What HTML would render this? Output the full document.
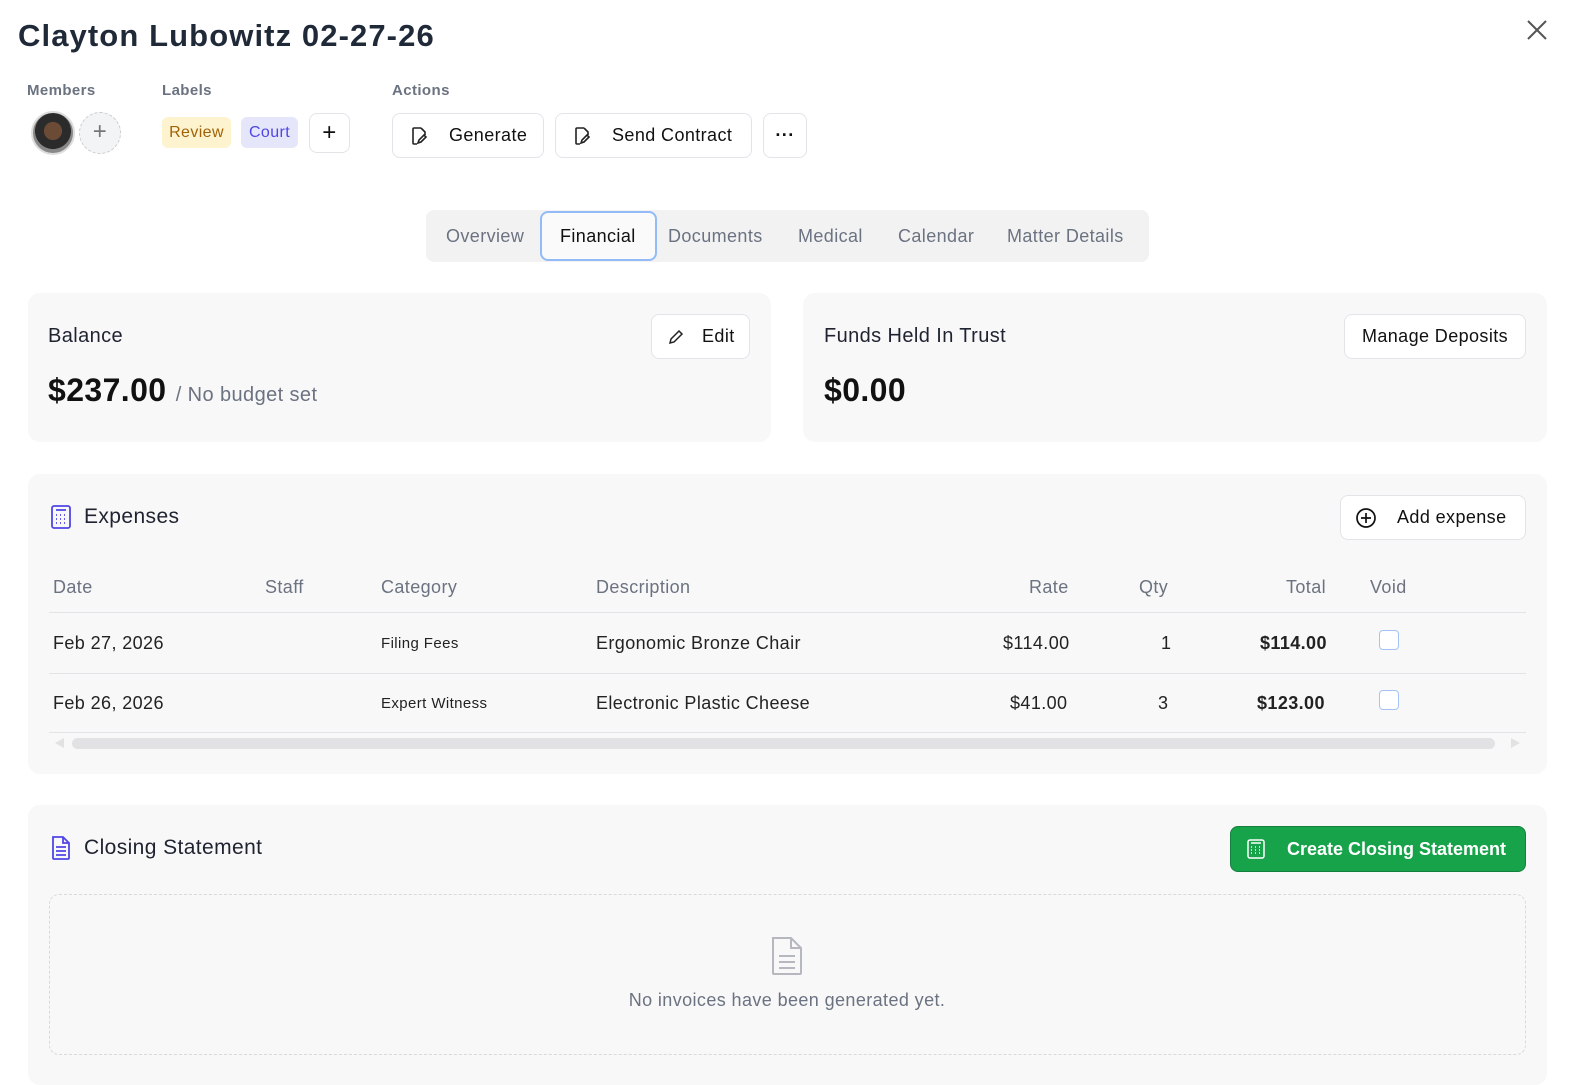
<!DOCTYPE html>
<html><head><meta charset="utf-8"><style>
*{box-sizing:border-box;margin:0;padding:0}
body{width:1588px;height:1084px;background:#fff;font-family:"Liberation Sans",sans-serif;color:#1f2330;position:relative;overflow:hidden;letter-spacing:0.4px}
.a{position:absolute}
.lbl{font-size:15px;color:#6b7280;font-weight:bold}
.btn{position:absolute;border:1px solid #e2e4e8;border-radius:8px;background:#fff;display:flex;align-items:center;font-size:18px;color:#111}
.card{position:absolute;background:#f8f8f9;border-radius:12px}
.th{position:absolute;top:577px;font-size:18px;color:#6b7280}
.td{position:absolute;font-size:18px;color:#222}
.sm{font-size:15px}
.cb{position:absolute;width:20px;height:20px;border:1.5px solid #a5c4f5;border-radius:4px;background:#fff}
</style></head><body>
<div class="a" style="left:18px;top:18px;font-size:31px;font-weight:bold;color:#1f2937;letter-spacing:1.1px">Clayton Lubowitz 02-27-26</div>
<svg class="a" style="left:1525px;top:18px" width="24" height="24" viewBox="0 0 24 24"><path d="M3 3L21 21M21 3L3 21" stroke="#555" stroke-width="2"/></svg>

<div class="a lbl" style="left:27px;top:82px">Members</div>
<div class="a lbl" style="left:162px;top:82px">Labels</div>
<div class="a lbl" style="left:392px;top:82px">Actions</div>
<div class="a" style="left:31px;top:111px;width:44px;height:44px;border-radius:50%;background:radial-gradient(circle at 50% 45%,#6b4a36 0 30%,#2b2b2b 31% 60%,#888 61%);border:2px solid #ddd"></div>
<div class="a" style="left:79px;top:112px;width:42px;height:42px;border-radius:50%;border:1.5px dashed #ccc;background:#f3f4f6;text-align:center;line-height:38px;font-size:24px;color:#777">+</div>
<div class="a" style="left:162px;top:117px;width:69px;height:31px;border-radius:6px;background:#fdf3cf;color:#a16207;font-size:16px;text-align:center;line-height:31px">Review</div>
<div class="a" style="left:241px;top:117px;width:57px;height:31px;border-radius:6px;background:#e6e6fb;color:#4f46e5;font-size:16px;text-align:center;line-height:31px">Court</div>
<div class="btn" style="left:309px;top:113px;width:41px;height:40px;justify-content:center;font-size:24px">+</div>
<div class="btn" style="left:392px;top:113px;width:152px;height:45px;padding-left:16px"><svg width="20" height="20" viewBox="0 0 20 20" fill="none" stroke="#222" stroke-width="1.6"><path d="M12 2H5a1 1 0 0 0-1 1v14a1 1 0 0 0 1 1h3M12 2l4 4v3M9 17l1-3 5-5 2 2-5 5z"/></svg><span style="margin-left:20px">Generate</span></div>
<div class="btn" style="left:555px;top:113px;width:197px;height:45px;padding-left:16px"><svg width="20" height="20" viewBox="0 0 20 20" fill="none" stroke="#222" stroke-width="1.6"><path d="M12 2H5a1 1 0 0 0-1 1v14a1 1 0 0 0 1 1h3M12 2l4 4v3M9 17l1-3 5-5 2 2-5 5z"/></svg><span style="margin-left:20px">Send Contract</span></div>
<div class="btn" style="left:763px;top:113px;width:44px;height:45px;justify-content:center;font-weight:bold">···</div>

<div class="a" style="left:426px;top:210px;width:723px;height:52px;background:#f2f2f3;border-radius:8px"></div>
<div class="a" style="left:540px;top:211px;width:117px;height:50px;background:#fafafa;border:2px solid #93bbf7;border-radius:8px"></div>
<div class="a" style="top:226px;left:446px;font-size:18px;color:#6b7280">Overview</div>
<div class="a" style="top:226px;left:560px;font-size:18px;color:#111">Financial</div>
<div class="a" style="top:226px;left:668px;font-size:18px;color:#6b7280">Documents</div>
<div class="a" style="top:226px;left:798px;font-size:18px;color:#6b7280">Medical</div>
<div class="a" style="top:226px;left:898px;font-size:18px;color:#6b7280">Calendar</div>
<div class="a" style="top:226px;left:1007px;font-size:18px;color:#6b7280">Matter Details</div>

<div class="card" style="left:28px;top:293px;width:743px;height:149px"></div>
<div class="a" style="left:48px;top:325px;font-size:20px">Balance</div>
<div class="btn" style="left:651px;top:314px;width:99px;height:45px;padding-left:16px"><svg width="16" height="16" viewBox="0 0 16 16" fill="none" stroke="#222" stroke-width="1.5"><path d="M2 14l1-4 8-8 3 3-8 8z"/></svg><span style="margin-left:18px">Edit</span></div>
<div class="a" style="left:48px;top:372px;font-size:32px;font-weight:bold;color:#111">$237.00 <span style="font-size:20px;color:#6b7280;font-weight:normal">/ No budget set</span></div>

<div class="card" style="left:803px;top:293px;width:744px;height:149px"></div>
<div class="a" style="left:824px;top:325px;font-size:20px">Funds Held In Trust</div>
<div class="btn" style="left:1344px;top:314px;width:182px;height:45px;justify-content:center">Manage Deposits</div>
<div class="a" style="left:824px;top:372px;font-size:32px;font-weight:bold;color:#111">$0.00</div>

<div class="card" style="left:28px;top:474px;width:1519px;height:300px"></div>
<svg class="a" style="left:51px;top:505px" width="20" height="24" viewBox="0 0 20 24" fill="none" stroke="#4f46e5" stroke-width="1.8"><rect x="1" y="1" width="18" height="22" rx="2"/><path d="M5 5h10M5 10h1M9 10h1M13 10h1M5 14h1M9 14h1M13 14h1M5 18h1M9 18h1M13 18h1"/></svg>
<div class="a" style="left:84px;top:505px;font-size:21px">Expenses</div>
<div class="btn" style="left:1340px;top:495px;width:186px;height:45px;padding-left:14px"><svg width="22" height="22" viewBox="0 0 22 22" fill="none" stroke="#111" stroke-width="1.7"><circle cx="11" cy="11" r="9"/><path d="M11 6v10M6 11h10"/></svg><span style="margin-left:20px">Add expense</span></div>
<div class="th" style="left:53px">Date</div>
<div class="th" style="left:265px">Staff</div>
<div class="th" style="left:381px">Category</div>
<div class="th" style="left:596px">Description</div>
<div class="th" style="left:1029px">Rate</div>
<div class="th" style="left:1139px">Qty</div>
<div class="th" style="left:1286px">Total</div>
<div class="th" style="left:1370px">Void</div>
<div class="a" style="left:49px;top:612px;width:1477px;height:1px;background:#e3e4e7"></div>
<div class="a" style="left:49px;top:673px;width:1477px;height:1px;background:#e3e4e7"></div>
<div class="a" style="left:49px;top:732px;width:1477px;height:1px;background:#e3e4e7"></div>
<div class="td" style="left:53px;top:633px">Feb 27, 2026</div>
<div class="td sm" style="left:381px;top:635px">Filing Fees</div>
<div class="td" style="left:596px;top:633px">Ergonomic Bronze Chair</div>
<div class="td" style="left:1003px;top:633px">$114.00</div>
<div class="td" style="left:1161px;top:633px">1</div>
<div class="td" style="left:1260px;top:633px;font-weight:bold">$114.00</div>
<div class="cb" style="left:1379px;top:630px"></div>
<div class="td" style="left:53px;top:693px">Feb 26, 2026</div>
<div class="td sm" style="left:381px;top:695px">Expert Witness</div>
<div class="td" style="left:596px;top:693px">Electronic Plastic Cheese</div>
<div class="td" style="left:1010px;top:693px">$41.00</div>
<div class="td" style="left:1158px;top:693px">3</div>
<div class="td" style="left:1257px;top:693px;font-weight:bold">$123.00</div>
<div class="cb" style="left:1379px;top:690px"></div>
<div class="a" style="left:72px;top:738px;width:1423px;height:11px;border-radius:6px;background:#e2e2e4"></div>
<div class="a" style="left:55px;top:738px;width:0;height:0;border-top:5px solid transparent;border-bottom:5px solid transparent;border-right:9px solid #e2e2e4"></div>
<div class="a" style="left:1511px;top:738px;width:0;height:0;border-top:5px solid transparent;border-bottom:5px solid transparent;border-left:9px solid #e2e2e4"></div>

<div class="card" style="left:28px;top:805px;width:1519px;height:280px"></div>
<svg class="a" style="left:51px;top:836px" width="20" height="24" viewBox="0 0 20 24" fill="none" stroke="#4f46e5" stroke-width="1.8"><path d="M2 1h10l6 6v15a1 1 0 0 1-1 1H3a1 1 0 0 1-1-1z M12 1v6h6 M5 11h10M5 15h10M5 19h10"/></svg>
<div class="a" style="left:84px;top:836px;font-size:21px">Closing Statement</div>
<div class="a" style="left:1230px;top:826px;width:296px;height:46px;background:#16a34a;border:1px solid #15803d;border-radius:8px;color:#fff;font-weight:bold;font-size:18px;display:flex;align-items:center;padding-left:16px;letter-spacing:0"><svg width="18" height="20" viewBox="0 0 18 20" fill="none" stroke="#fff" stroke-width="1.5"><rect x="1" y="1" width="16" height="18" rx="2"/><path d="M4 4h10M4 8h1M8 8h1M12 8h1M4 11h1M8 11h1M12 11h1M4 14h1M8 14h1M12 14h1"/></svg><span style="margin-left:22px">Create Closing Statement</span></div>
<div class="a" style="left:49px;top:894px;width:1477px;height:161px;border:1px dashed #d8d9dc;border-radius:10px"></div>
<svg class="a" style="left:770px;top:936px" width="34" height="40" viewBox="0 0 34 40" fill="none" stroke="#b5b8be" stroke-width="2"><path d="M3 2h18l10 10v25a1 1 0 0 1-1 1H4a1 1 0 0 1-1-1z M21 2v10h10 M9 20h16M9 26h16M9 32h16"/></svg>
<div class="a" style="left:0;width:1574px;top:990px;text-align:center;font-size:18px;color:#6b7280">No invoices have been generated yet.</div>
</body></html>
